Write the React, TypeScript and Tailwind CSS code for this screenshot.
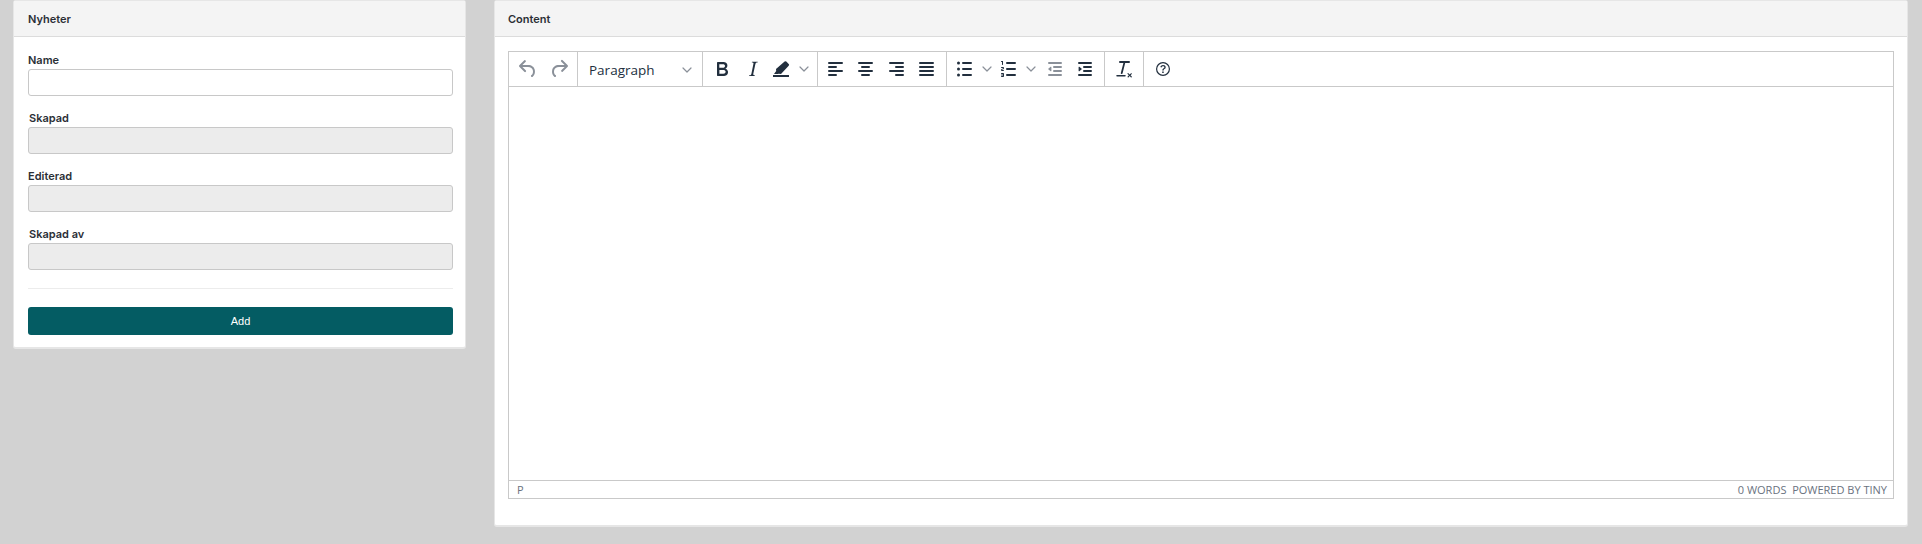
import React from "react";

const D = "#222f3e";
const M = "#8a9099";

function Icon({ d, color = D, ml = "" }: { d: string; color?: string; ml?: string }) {
  return (
    <svg width={24} height={24} viewBox="0 0 24 24" fill={color} className={`block shrink-0 ${ml}`}>
      <path d={d} fillRule="evenodd" />
    </svg>
  );
}

const bars = (rows: [number, number, number][]) =>
  rows.map(([x, w, y]) => `M${x + 1} ${y}h${w - 2}a1 1 0 0 1 0 2h-${w - 2}a1 1 0 0 1 0-2z`).join("");

const P = {
  undo: "M6.4 8H12c3.7 0 6.2 2 6.8 5.1.6 2.7-.4 5.6-2.3 6.8a1 1 0 0 1-1-1.8c1.1-.6 1.8-2.7 1.4-4.6-.5-2.1-2.1-3.5-4.9-3.5H6.4l3.3 3.3a1 1 0 1 1-1.4 1.4l-5-5a1 1 0 0 1 0-1.4l5-5a1 1 0 0 1 1.4 1.4L6.4 8z",
  redo: "M17.6 10H12c-2.8 0-4.4 1.4-4.9 3.5-.4 2 .3 4 1.4 4.6a1 1 0 1 1-1 1.8c-2-1.2-2.9-4.1-2.3-6.8.6-3 3-5.1 6.8-5.1h5.6l-3.3-3.3a1 1 0 1 1 1.4-1.4l5 5a1 1 0 0 1 0 1.4l-5 5a1 1 0 0 1-1.4-1.4l3.3-3.3z",
  bold: "M7.8 19c-.3 0-.5 0-.6-.2l-.2-.5V5.7c0-.2 0-.4.2-.5l.6-.2h5c1.5 0 2.7.3 3.5 1 .7.6 1.1 1.4 1.1 2.5a3 3 0 0 1-.6 1.9c-.4.6-1 1-1.6 1.2.4.1.9.3 1.3.6s.8.7 1 1.2c.4.4.5 1 .5 1.6 0 1.3-.4 2.3-1.3 3-.8.7-2.1 1-3.8 1H7.8zm5-8.3c.6 0 1.2-.1 1.6-.5.4-.3.6-.7.6-1.3 0-1.1-.8-1.7-2.3-1.7H9.3v3.5h3.4zm.5 6c.7 0 1.3-.1 1.7-.4.4-.4.6-.9.6-1.5s-.2-1-.7-1.4c-.4-.3-1-.4-2-.4H9.4v3.8h4z",
  italic: "M16.7 4.7l-.1.9h-.3c-.6 0-1 0-1.4.3-.3.3-.4.6-.5 1.1l-2.1 9.8v.6c0 .5.4.8 1.4.8h.2l-.2.8H8l.2-.8h.2c1.1 0 1.8-.5 2-1.5l2-9.8.1-.5c0-.6-.4-.8-1.4-.8h-.3l.2-.9h5.8z",
  highlight: "M4 18h16v2H4zM5 17l2.2-3-.2-2 8.6-7.4a1.2 1.2 0 0 1 1.7 0l2.4 2.4a1.2 1.2 0 0 1 0 1.7L12 17l-2.2-.3-1 .3z",
  left: bars([[5, 15, 5], [5, 9, 9], [5, 15, 13], [5, 9, 17]]),
  center: bars([[5, 15, 5], [8, 9, 9], [5, 15, 13], [8, 9, 17]]),
  right: bars([[5, 15, 5], [11, 9, 9], [5, 15, 13], [11, 9, 17]]),
  justify: bars([[5, 15, 5], [5, 15, 9], [5, 15, 13], [5, 15, 17]]),
  bullist:
    "M11 5h8a1 1 0 0 1 0 2h-8a1 1 0 0 1 0-2zm0 6h8a1 1 0 0 1 0 2h-8a1 1 0 0 1 0-2zm0 6h8a1 1 0 0 1 0 2h-8a1 1 0 0 1 0-2zM5 6a1.5 1.5 0 1 1 3 0 1.5 1.5 0 0 1-3 0zm0 6a1.5 1.5 0 1 1 3 0 1.5 1.5 0 0 1-3 0zm0 6a1.5 1.5 0 1 1 3 0 1.5 1.5 0 0 1-3 0z",
  numlist:
    "M11 17h8a1 1 0 0 1 0 2h-8a1 1 0 0 1 0-2zm0-6h8a1 1 0 0 1 0 2h-8a1 1 0 0 1 0-2zm0-6h8a1 1 0 0 1 0 2h-8a1 1 0 1 1 0-2zM7 4v3.5c0 .3-.2.5-.5.5a.5.5 0 0 1-.5-.5V5h-.5a.5.5 0 0 1 0-1H7zm-1 8.8l.2.2h1.3c.3 0 .5.2.5.5s-.2.5-.5.5H5.9a1 1 0 0 1-.9-1V13c0-.4.3-.8.6-1l1.2-.4.2-.3a.2.2 0 0 0-.2-.2H5.5a.5.5 0 0 1-.5-.5c0-.3.2-.5.5-.5h1.6c.5 0 .9.4.9 1v.1c0 .4-.3.8-.6 1l-1.2.4-.2.3zM8 17v2c0 .6-.4 1-1 1H5.5a.5.5 0 0 1 0-1h1.2c.2 0 .3-.1.3-.3 0-.2-.1-.3-.3-.3H5.4a.4.4 0 1 1 0-.8h1.3c.2 0 .3-.1.3-.3 0-.2-.1-.3-.3-.3H5.5a.5.5 0 1 1 0-1H7c.6 0 1 .4 1 1v.1z",
  outdent:
    "M7 5h12a1 1 0 0 1 0 2H7a1 1 0 1 1 0-2zm5 4h7a1 1 0 0 1 0 2h-7a1 1 0 0 1 0-2zm0 4h7a1 1 0 0 1 0 2h-7a1 1 0 0 1 0-2zm-5 4h12a1 1 0 0 1 0 2H7a1 1 0 0 1 0-2zm1.6-2.8L6 12l2.6-2.2a.5.5 0 0 1 .8.4v3.6a.5.5 0 0 1-.8.4z",
  indent:
    "M7 5h12a1 1 0 0 1 0 2H7a1 1 0 1 1 0-2zm5 4h7a1 1 0 0 1 0 2h-7a1 1 0 0 1 0-2zm0 4h7a1 1 0 0 1 0 2h-7a1 1 0 0 1 0-2zm-5 4h12a1 1 0 0 1 0 2H7a1 1 0 0 1 0-2zm.4-2.8a.5.5 0 0 1-.8-.4v-3.6a.5.5 0 0 1 .8-.4L10 12l-2.6 2.2z",
  clear:
    "M13.2 6l-2.6 10.2a.9.9 0 0 1-1 .8.8.8 0 0 1-.8-1L11.4 6H8a1 1 0 1 1 0-2h9a1 1 0 0 1 0 2h-3.8zM5 18h8a.7.7 0 0 1 0 1.5H5A.7.7 0 0 1 5 18zM15.6 16.2a.6.6 0 0 1 .8 0l1.3 1.3 1.3-1.3a.6.6 0 0 1 .8.8l-1.3 1.3 1.3 1.3a.6.6 0 0 1-.8.8l-1.3-1.3-1.3 1.3a.6.6 0 0 1-.8-.8l1.3-1.3-1.3-1.3a.6.6 0 0 1 0-.8z",
  help:
    "M12 5a7 7 0 1 1 0 14 7 7 0 0 1 0-14zm0 1.2a5.8 5.8 0 1 0 0 11.6 5.8 5.8 0 0 0 0-11.6zM11.2 14.6h1.5v1.4h-1.5zM12 8c1.6 0 2.7.9 2.7 2.2 0 .9-.5 1.5-1.2 1.9-.6.4-.8.7-.8 1.4h-1.4c0-1.1.4-1.7 1.3-2.2.5-.3.8-.6.8-1 0-.6-.6-1-1.4-1-.8 0-1.3.4-1.5 1.1l-1.3-.3C9.9 8.8 10.8 8 12 8z",
};

function Chevron({ ml = "" }: { ml?: string }) {
  return (
    <svg width="10" height="6" viewBox="0 0 10 6" fill="none" stroke={M} strokeWidth="1.2" strokeLinecap="round" strokeLinejoin="round" className={`block shrink-0 ${ml}`}>
      <path d="M1 1l4 4 4-4" />
    </svg>
  );
}

function Field({ label, disabled, ml }: { label: string; disabled?: boolean; ml?: boolean }) {
  return (
    <div className="h-[58px]">
      <div className={`h-[20px] pt-[3px] text-[11px] leading-[16px] font-semibold text-[#2b2f36] ${ml ? "pl-[1px]" : ""}`}>{label}</div>
      <div className={`h-[27px] rounded-[3px] border border-[#c8c8c8] ${disabled ? "bg-[#ececec]" : "bg-white"}`} />
    </div>
  );
}

function Header({ title, pad }: { title: string; pad: string }) {
  return (
    <div className={`flex h-[36px] items-center border-b border-[#dcdcdc] bg-[#f4f4f4] pt-[2px] text-[11px] font-semibold text-[#2b2f36] ${pad}`}>
      {title}
    </div>
  );
}

export default function App() {
  return (
    <div className="flex h-[544px] items-start gap-[28px] bg-[#d2d2d2] pl-[13px] font-['Inter',sans-serif]">
      <div className="h-[349px] w-[453px] rounded-[3px] border border-b-2 border-[#e6e6e6] bg-white">
        <Header title="Nyheter" pad="pl-[14px]" />
        <div className="pl-[14px] pr-[12px] pt-[12px]">
          <Field label="Name" />
          <Field label="Skapad" disabled ml />
          <Field label="Editerad" disabled />
          <Field label="Skapad av" disabled ml />
          <div className="mt-[7px] border-t border-[#ececec]" />
          <div className="mt-[18px] flex h-[28px] items-center justify-center rounded-[3px] bg-[#045c63] font-['Liberation_Sans',sans-serif] text-[11px] text-white">
            Add
          </div>
        </div>
      </div>

      <div className="h-[527px] w-[1414px] rounded-[3px] border border-b-2 border-[#e6e6e6] bg-white">
        <Header title="Content" pad="pl-[13px]" />
        <div className="ml-[13px] mt-[14px] flex h-[448px] w-[1386px] flex-col border border-[#c9c9c9]">
          <div className="flex h-[35px] items-center border-b border-[#c9c9c9]">
            <div className="flex h-full w-[69px] items-center border-r border-[#c9c9c9]">
              <Icon d={P.undo} color={M} ml="ml-[7px]" />
              <Icon d={P.redo} color={M} ml="ml-[7px]" />
            </div>
            <div className="flex h-full w-[125px] items-center justify-between border-r border-[#c9c9c9] pl-[11px] pr-[10px] pt-[2px] font-['Open_Sans',sans-serif] text-[13.5px] text-[#222f3e]">
              <span>Paragraph</span>
              <Chevron />
            </div>
            <div className="flex h-full w-[115px] items-center border-r border-[#c9c9c9]">
              <Icon d={P.bold} ml="ml-[7px]" />
              <Icon d={P.italic} ml="ml-[7px]" />
              <Icon d={P.highlight} ml="ml-[4px]" />
              <Chevron ml="ml-[6px]" />
            </div>
            <div className="flex h-full w-[129px] items-center border-r border-[#c9c9c9]">
              <Icon d={P.left} ml="ml-[5px]" />
              <Icon d={P.center} ml="ml-[6px]" />
              <Icon d={P.right} ml="ml-[7px]" />
              <Icon d={P.justify} ml="ml-[6px]" />
            </div>
            <div className="flex h-full w-[158px] items-center border-r border-[#c9c9c9]">
              <Icon d={P.bullist} ml="ml-[5px]" />
              <Chevron ml="ml-[6px]" />
              <Icon d={P.numlist} ml="ml-[4px]" />
              <Chevron ml="ml-[6px]" />
              <Icon d={P.outdent} color={M} ml="ml-[6px]" />
              <Icon d={P.indent} ml="ml-[6px]" />
            </div>
            <div className="flex h-full w-[39px] items-center border-r border-[#c9c9c9]">
              <Icon d={P.clear} ml="ml-[7px]" />
            </div>
            <Icon d={P.help} ml="ml-[7px]" />
          </div>
          <div className="flex-1" />
          <div className="flex h-[18px] items-center justify-between border-t border-[#c9c9c9] pl-[8px] pr-[6px] pt-[1px] font-['Open_Sans',sans-serif] text-[11px] text-[#6a7280]">
            <span>P</span>
            <span className="whitespace-pre">0 WORDS  POWERED BY TINY</span>
          </div>
        </div>
      </div>
    </div>
  );
}
